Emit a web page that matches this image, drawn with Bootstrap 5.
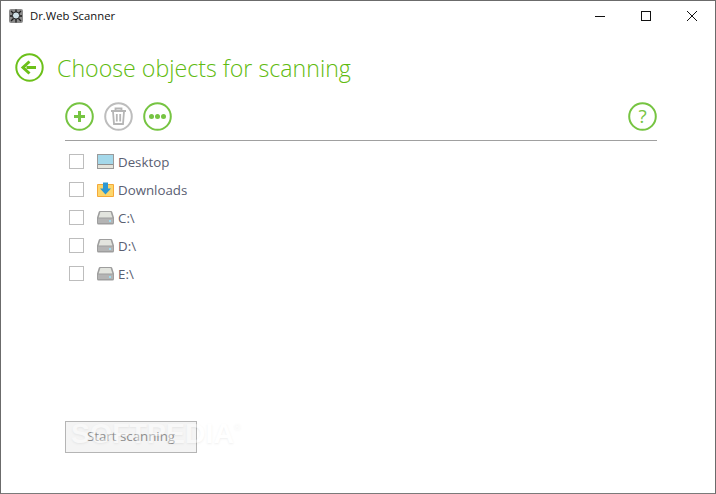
<!doctype html>
<html lang="en">
<head>
<meta charset="utf-8">
<title>Dr.Web Scanner</title>
<link href="https://cdn.jsdelivr.net/npm/bootstrap@5.3.0/dist/css/bootstrap.min.css" rel="stylesheet">
<style>
html,body{height:100%;margin:0;background:#fff}
body{font-family:"Open Sans","Noto Sans","Liberation Sans",sans-serif;overflow:hidden}
.app-window{width:716px;height:494px;border:1px solid #6b6b6b;border-bottom-color:#7a7a7a;background:#fff;position:relative;overflow:hidden}
.title-bar{height:30px;padding-left:8px}
.title-text{font-size:11.300px;color:#111;margin-left:7px;line-height:1}
.win-btn{width:46px;height:30px;background:none;border:0;padding:0;display:flex;align-items:center;justify-content:center}
.heading-row{padding-left:14px;margin-top:21px;height:30px}
.heading-text{font-size:23.200px;font-weight:300;color:#5fbb10;margin:2px 0 0 13px;line-height:30px}
.content-area{padding-left:64px;width:656px}
.tool-row{margin-top:20px;height:29px;gap:10px}
.round-ico{width:29px;height:29px;display:block;padding:0;background:none;border:0}
.divider{height:1px;background:#a0a0a0;margin:9px 0 7px}
.obj-row{height:28px;padding-left:4px}
.box-mark{appearance:none;width:15px;height:15px;border:1px solid #bdbdbd;background:#fff;margin:0 13px 1px 0;flex:none}
.obj-ico{width:17px;height:15px;flex:none;margin:0 4px 1px 0}
.obj-label{font-size:13.300px;color:#5a6072;line-height:1;padding-top:1px}
.start-btn{position:absolute;left:64px;top:420px;width:132px;height:32px;border:1px solid #b5b5b5;border-radius:0;background:#f4f4f4;color:#8e8e8e;font-size:13.300px;padding:0;text-align:center}
.mark-text{position:absolute;left:70px;top:414px;font-family:"Liberation Sans",sans-serif;font-size:28.500px;font-weight:700;color:#fff;text-shadow:0 1px 2px rgba(0,0,0,.14);opacity:.4;line-height:1.3;pointer-events:none}
.mark-text sup{font-size:9px;font-weight:400;top:-1.500em}
</style>
</head>
<body>
<div class="app-window d-flex flex-column">
  <div class="title-bar d-flex align-items-center">
    <svg width="14" height="16" viewBox="0 0 14 16"><rect x="0" y="1" width="14" height="14" rx="2" fill="#8b8b8b"/><g stroke="#1d1d1d" stroke-width="1.300"><path d="M2 3l10 10M12 3L2 13M7 1.500v13M1 8h12"/></g><circle cx="7" cy="7.500" r="3.600" fill="#cfe0e6" stroke="#222"/></svg>
    <span class="title-text">Dr.Web Scanner</span>
    <div class="ms-auto d-flex">
      <button class="win-btn" aria-label="Minimize"><svg width="10" height="10"><path d="M0 5.500h10" stroke="#111"/></svg></button>
      <button class="win-btn" aria-label="Maximize"><svg width="10" height="10"><rect x=".5" y=".5" width="9" height="9" fill="none" stroke="#111"/></svg></button>
      <button class="win-btn" aria-label="Close"><svg width="10" height="10"><path d="M0 0l10 10M10 0L0 10" stroke="#111"/></svg></button>
    </div>
  </div>

  <div class="heading-row d-flex align-items-center">
    <svg class="round-ico" viewBox="0 0 29 29"><circle cx="14.500" cy="14.500" r="13.200" fill="none" stroke="#6cc01a" stroke-width="2"/><path d="M21 14.500H11.500" stroke="#6cc01a" stroke-width="3"/><path d="M14.500 8.500L8 14.500l6.500 6" fill="none" stroke="#6cc01a" stroke-width="3"/></svg>
    <h1 class="heading-text">Choose objects for scanning</h1>
  </div>

  <div class="content-area">
    <div class="tool-row d-flex">
      <svg class="round-ico" viewBox="0 0 29 29"><circle cx="14.500" cy="14.500" r="13.300" fill="none" stroke="#76c442" stroke-width="2"/><path d="M14.500 9v11M9 14.500h11" stroke="#76c442" stroke-width="3"/></svg>
      <svg class="round-ico" viewBox="0 0 29 29"><circle cx="14.500" cy="14.500" r="13.300" fill="none" stroke="#bdbdbd" stroke-width="2"/><path d="M7 9h15M11.500 8.500V6.500h6v2M9 9.500l1 12.500h9l1-12.500M12.800 12v7.500M16.200 12v7.500" fill="none" stroke="#b5b5b5" stroke-width="1.800"/></svg>
      <svg class="round-ico" viewBox="0 0 29 29"><circle cx="14.500" cy="14.500" r="13.300" fill="none" stroke="#76c442" stroke-width="2"/><circle cx="8.500" cy="14.500" r="2.500" fill="#76c442"/><circle cx="14.500" cy="14.500" r="2.500" fill="#76c442"/><circle cx="20.500" cy="14.500" r="2.500" fill="#76c442"/></svg>
      <svg class="round-ico ms-auto me-0" viewBox="0 0 29 29"><circle cx="14.500" cy="14.500" r="13.300" fill="none" stroke="#76c442" stroke-width="2"/><text x="14.500" y="21" text-anchor="middle" font-family="Open Sans, sans-serif" font-size="19" fill="#76c442">?</text></svg>
    </div>
    <div class="divider"></div>

    <div class="obj-row d-flex align-items-center">
      <input class="box-mark" type="checkbox" aria-label="Desktop">
      <svg class="obj-ico" viewBox="0 0 17 15"><rect x=".5" y=".5" width="16" height="14" fill="#a4d8ea" stroke="#9a9a9a"/><rect x="1" y="11" width="15" height="3" fill="#e4e4dc"/><path d="M1 10.500h15" stroke="#8f8f8f"/></svg>
      <span class="obj-label">Desktop</span>
    </div>
    <div class="obj-row d-flex align-items-center">
      <input class="box-mark" type="checkbox" aria-label="Downloads">
      <svg class="obj-ico" viewBox="0 0 17 15"><path d="M.5 2.500h16v12H.5z" fill="#fdd66b" stroke="#f5a93a"/><path d="M6 .5h5v6h3l-5.500 6L3 6.500h3z" fill="#2d97d3"/></svg>
      <span class="obj-label">Downloads</span>
    </div>
    <div class="obj-row d-flex align-items-center">
      <input class="box-mark" type="checkbox" aria-label="C:\">
      <svg class="obj-ico" viewBox="0 0 17 15"><path d="M3 1h11q1 0 1.300 1L17 7.500V13q0 1.500-1.500 1.500h-14Q0 14.500 0 13V7.500L1.700 2Q2 1 3 1z" fill="#9e9e9e"/><path d="M3.400 2h10.200L15.400 7.500H1.600z" fill="#e2e4de"/><path d="M1 8.500h15V13H1z" fill="#b4b4b4"/><rect x="12" y="10" width="2" height="2" fill="#9fdcf0"/></svg>
      <span class="obj-label">C:\</span>
    </div>
    <div class="obj-row d-flex align-items-center">
      <input class="box-mark" type="checkbox" aria-label="D:\">
      <svg class="obj-ico" viewBox="0 0 17 15"><path d="M3 1h11q1 0 1.300 1L17 7.500V13q0 1.500-1.500 1.500h-14Q0 14.500 0 13V7.500L1.700 2Q2 1 3 1z" fill="#9e9e9e"/><path d="M3.400 2h10.200L15.400 7.500H1.600z" fill="#e2e4de"/><path d="M1 8.500h15V13H1z" fill="#b4b4b4"/><rect x="12" y="10" width="2" height="2" fill="#9fdcf0"/></svg>
      <span class="obj-label">D:\</span>
    </div>
    <div class="obj-row d-flex align-items-center">
      <input class="box-mark" type="checkbox" aria-label="E:\">
      <svg class="obj-ico" viewBox="0 0 17 15"><path d="M3 1h11q1 0 1.300 1L17 7.500V13q0 1.500-1.500 1.500h-14Q0 14.500 0 13V7.500L1.700 2Q2 1 3 1z" fill="#9e9e9e"/><path d="M3.400 2h10.200L15.400 7.500H1.600z" fill="#e2e4de"/><path d="M1 8.500h15V13H1z" fill="#b4b4b4"/><rect x="12" y="10" width="2" height="2" fill="#9fdcf0"/></svg>
      <span class="obj-label">E:\</span>
    </div>
  </div>

  <button class="start-btn" disabled>Start scanning</button>
  <div class="mark-text">SOFTPEDIA<sup>®</sup></div>
</div>
<script src="https://cdn.jsdelivr.net/npm/bootstrap@5.3.0/dist/js/bootstrap.bundle.min.js"></script>
</body>
</html>
